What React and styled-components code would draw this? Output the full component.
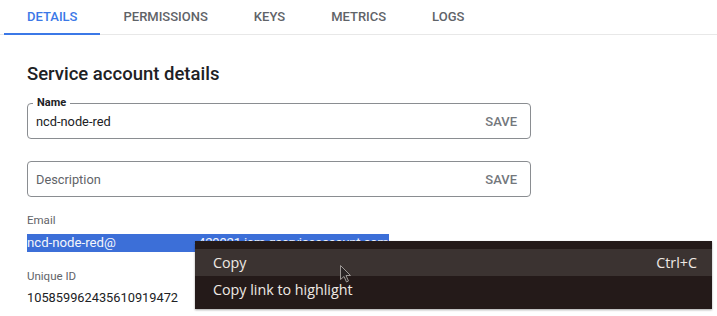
import styled, { createGlobalStyle } from "styled-components"

const GlobalStyle = createGlobalStyle`
  html, body {
    margin: 0;
    padding: 0;
    background: #fff;
    font-family: Roboto, "Liberation Sans", sans-serif;
    color: #202124;
  }
`

const Page = styled.div`
  position: relative;
  width: 717px;
  height: 316px;
  overflow: hidden;
`

const TabBar = styled.div`
  display: flex;
  padding-left: 4px;
  height: 35px;
  border-bottom: 1px solid #e8e8e8;
  box-sizing: border-box;
`

const Tab = styled.div`
  display: flex;
  align-items: center;
  padding: 0 23px;
  height: 35px;
  font-size: 13px;
  font-weight: 500;
  color: ${ p => p.active ? "#3b78e7" : "#5f6368" };
  border-bottom: 2px solid ${ p => p.active ? "#3b78e7" : "transparent" };
  box-sizing: border-box;
`

const Content = styled.div`
  display: flex;
  flex-direction: column;
  padding: 28px 0 0 27px;
`

const Heading = styled.div`
  font-size: 18.5px;
  font-weight: 500;
  color: #202124;
  line-height: 22px;
  margin-bottom: 18px;
`

const Field = styled.div`
  position: relative;
  display: flex;
  align-items: center;
  justify-content: space-between;
  width: 504px;
  height: 36px;
  margin-bottom: ${ p => p.bottom }px;
  padding: 0 13px 0 8px;
  border: 1px solid #8a8d91;
  border-radius: 4px;
  box-sizing: border-box;
`

const FloatLabel = styled.span`
  position: absolute;
  left: 5px;
  top: -7px;
  padding: 0 4px;
  background: #fff;
  font-size: 11px;
  font-weight: 700;
  color: #202124;
  line-height: 12px;
`

const Value = styled.span`
  font-size: 12.8px;
  color: ${ p => p.placeholder ? "#5f6368" : "#202124" };
`

const Save = styled.span`
  font-size: 13px;
  font-weight: 500;
  color: #73777c;
`

const Label = styled.div`
  font-size: 11.5px;
  color: #5f6368;
  line-height: 14px;
  margin-top: ${ p => p.top }px;
`

const Text = styled.div`
  font-size: ${ p => p.size }px;
  color: #202124;
  line-height: 18px;
  margin-top: ${ p => p.top }px;
`

const Selected = styled.span`
  display: inline-block;
  background: #3c6fd8;
  color: #f4f6fb;
  white-space: pre;
`

const Domain = styled.span`
  letter-spacing: -0.3px;
`

const Gap = styled.span`
  display: inline-block;
  width: 78px;
  border-left: 1px solid #cfd8f0;
`

const Menu = styled.div`
  position: absolute;
  left: 195px;
  top: 241px;
  width: 517px;
  height: 68px;
  padding: 8px 0 6px;
  box-sizing: border-box;
  background: #241a19;
  box-shadow: 0 1px 2px rgba(0, 0, 0, 0.35);
  font-family: "Open Sans", "DejaVu Sans", sans-serif;
  font-size: 14.3px;
  color: #efe9e4;
`

const MenuItem = styled.div`
  display: flex;
  justify-content: space-between;
  align-items: center;
  height: 27px;
  padding: 0 15px 0 18px;
  background: ${ p => p.hover ? "#3b3331" : "transparent" };
`

const Cursor = styled.svg`
  position: absolute;
  left: 339px;
  top: 264px;
`

function App() {
  const tabs = [ "DETAILS", "PERMISSIONS", "KEYS", "METRICS", "LOGS" ]

  return (
    <Page>
      <GlobalStyle/>
      <TabBar>
        { tabs.map((t, i) => <Tab key={ t } active={ i === 0 }>{ t }</Tab>) }
      </TabBar>
      <Content>
        <Heading>Service account details</Heading>
        <Field bottom={ 22 }>
          <FloatLabel>Name</FloatLabel>
          <Value>ncd-node-red</Value>
          <Save>SAVE</Save>
        </Field>
        <Field bottom={ 0 }>
          <Value placeholder="true">Description</Value>
          <Save>SAVE</Save>
        </Field>
        <Label top={ 16 }>Email</Label>
        <Text size={ 13.2 } top={ 7 }>
          <Selected>ncd-node-red@<Gap/><Domain>-429921.iam.gserviceaccount.com</Domain></Selected>
        </Text>
        <Label top={ 17 }>Unique ID</Label>
        <Text size={ 12.8 } top={ 6 }>105859962435610919472</Text>
      </Content>
      <Menu>
        <MenuItem hover>
          <span>Copy</span>
          <span>Ctrl+C</span>
        </MenuItem>
        <MenuItem>
          <span>Copy link to highlight</span>
        </MenuItem>
      </Menu>
      <Cursor width="14" height="20" viewBox="0 0 14 20">
        <path d="M1.5 1.5 L1.5 15.5 L5 12.5 L7.5 18 L9.5 17 L7 11.5 L11.5 11.5 Z"
          fill="#2a2525" stroke="#9c9794" strokeWidth="1" strokeLinejoin="round" />
      </Cursor>
    </Page>
  )
}

export default App
